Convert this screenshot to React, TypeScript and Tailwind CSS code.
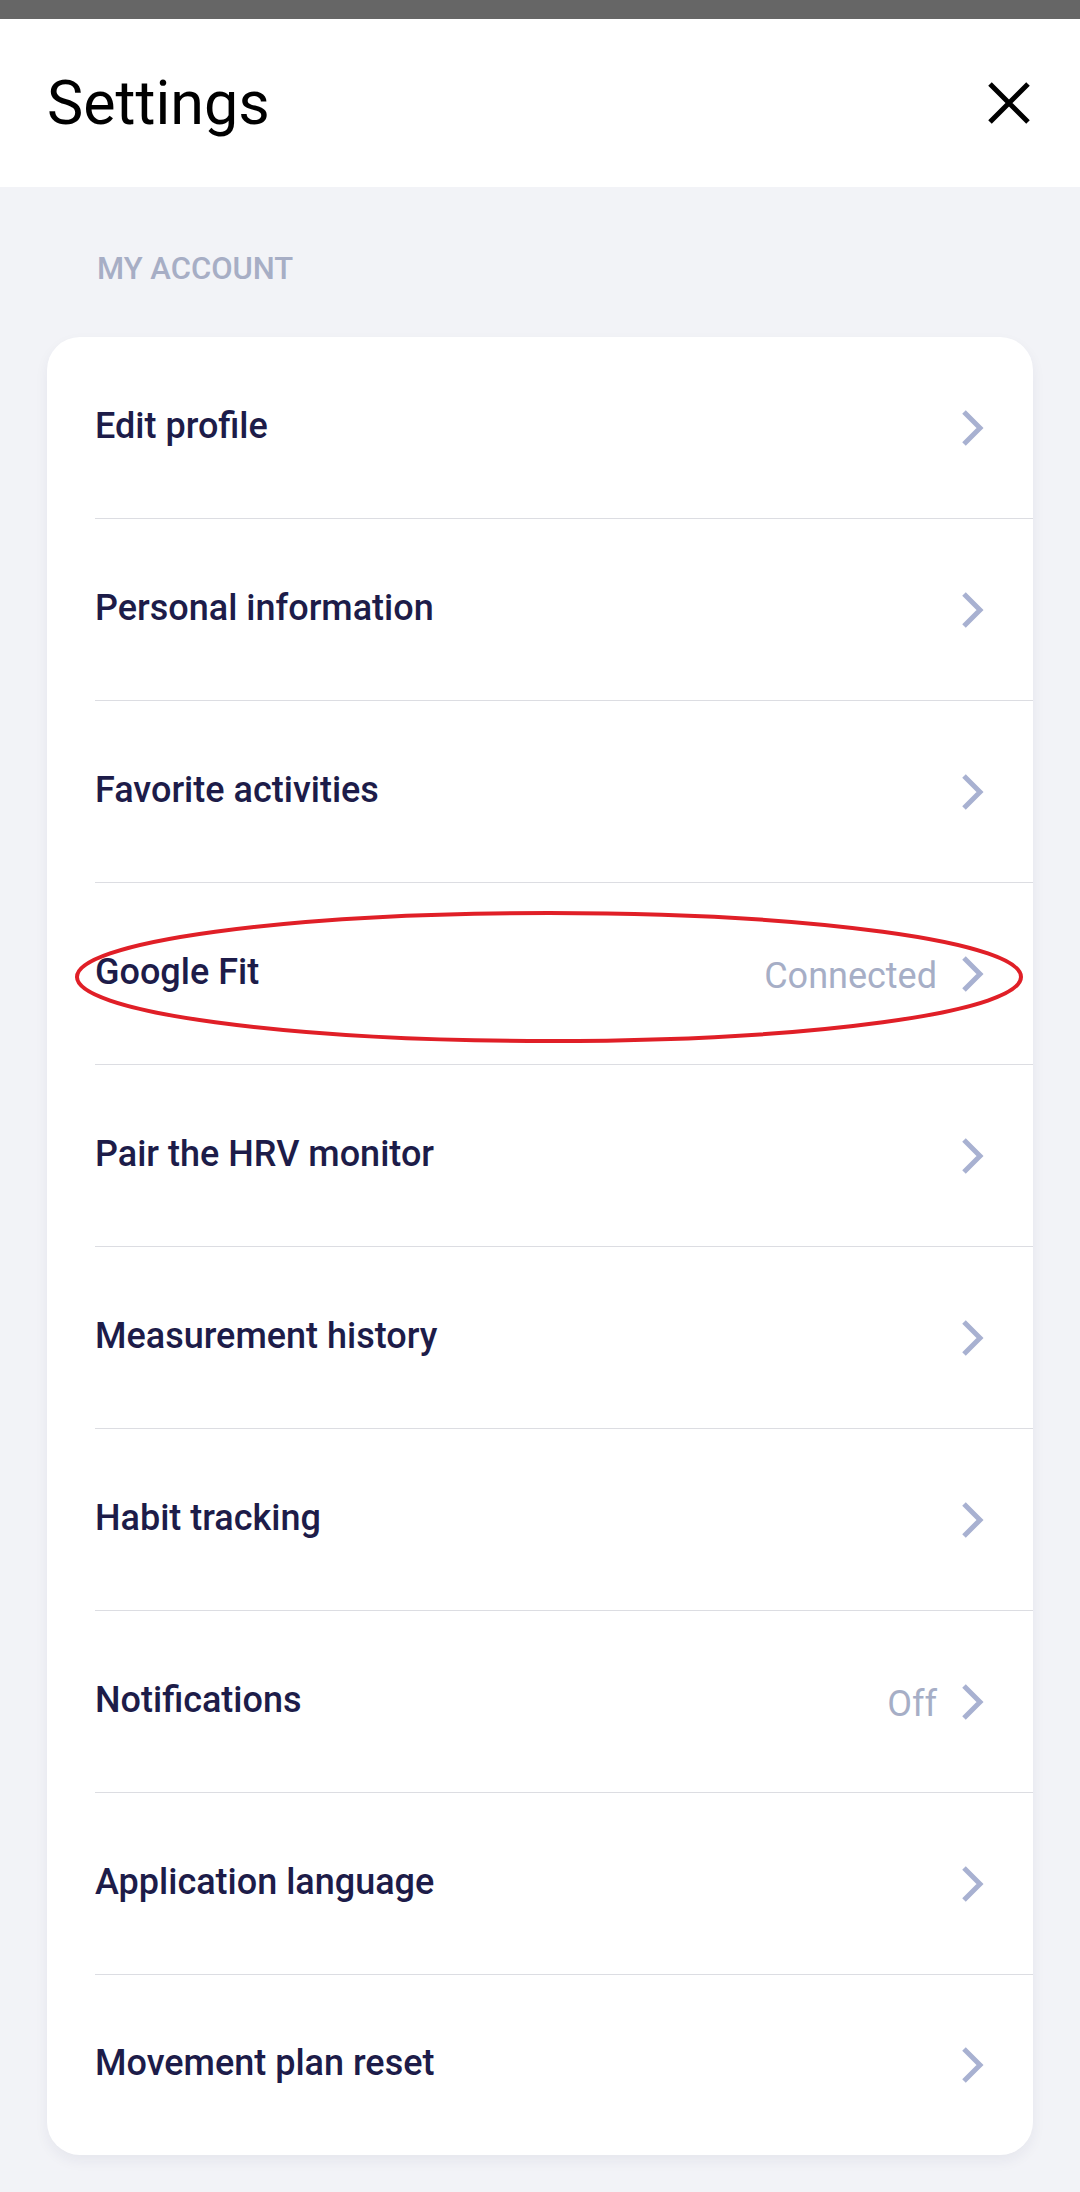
import React from 'react';

type Item = { label: string; value?: string; marked?: boolean };

const items: Item[] = [
  { label: 'Edit profile' },
  { label: 'Personal information' },
  { label: 'Favorite activities' },
  { label: 'Google Fit', value: 'Connected', marked: true },
  { label: 'Pair the HRV monitor' },
  { label: 'Measurement history' },
  { label: 'Habit tracking' },
  { label: 'Notifications', value: 'Off' },
  { label: 'Application language' },
  { label: 'Movement plan reset' },
];

const Chevron = () => (
  <svg width="24" height="38" viewBox="0 0 24 38" className="shrink-0">
    <polyline points="3,3 19,19 3,35" fill="none" stroke="#a8b1d1" strokeWidth="5" />
  </svg>
);

const Row: React.FC<{ item: Item; last: boolean }> = ({ item, last }) => (
  <div className={`relative pl-[48px] ${last ? 'h-[180px]' : 'h-[182px]'}`}>
    <div className={`flex h-full items-center justify-between pr-[48px] ${last ? '' : 'border-b border-[#dcdde2]'}`}>
      <span className="-mt-[4px] text-[36px] font-medium text-[#1d1c49]">{item.label}</span>
      <div className="flex items-center gap-[24px]">
        {item.value && (
          <span className="mt-[4px] text-[36px] text-[#a6aec6]">{item.value}</span>
        )}
        <Chevron />
      </div>
    </div>
    {item.marked && (
      <svg
        className="pointer-events-none absolute left-[27px] top-[27px]"
        width="950"
        height="134"
        viewBox="0 0 950 134"
      >
        <ellipse cx="475" cy="67" rx="472" ry="64" fill="none" stroke="#e01f27" strokeWidth="4" />
      </svg>
    )}
  </div>
);

export default function App() {
  return (
    <div className="min-h-[2192px] w-[1080px] bg-[#f2f3f7] font-['Roboto',sans-serif]">
      <div className="h-[19px] bg-[#666666]" />
      <header className="flex h-[168px] items-center justify-between bg-white pl-[47px] pr-[49px]">
        <h1 className="text-[61px] leading-none text-black">Settings</h1>
        <svg width="44" height="42" viewBox="0 0 44 42">
          <path d="M3 2 L41 40 M41 2 L3 40" stroke="#000" strokeWidth="5" />
        </svg>
      </header>

      <div className="pl-[97px] pt-[63px] text-[31px] font-medium leading-[38px] text-[#a7aec5]">
        MY ACCOUNT
      </div>

      <div className="mx-[47px] mt-[49px] rounded-[33px] bg-white shadow-[0_6px_14px_rgba(30,40,80,0.06)]">
        {items.map((item, i) => (
          <Row key={item.label} item={item} last={i === items.length - 1} />
        ))}
      </div>
    </div>
  );
}
